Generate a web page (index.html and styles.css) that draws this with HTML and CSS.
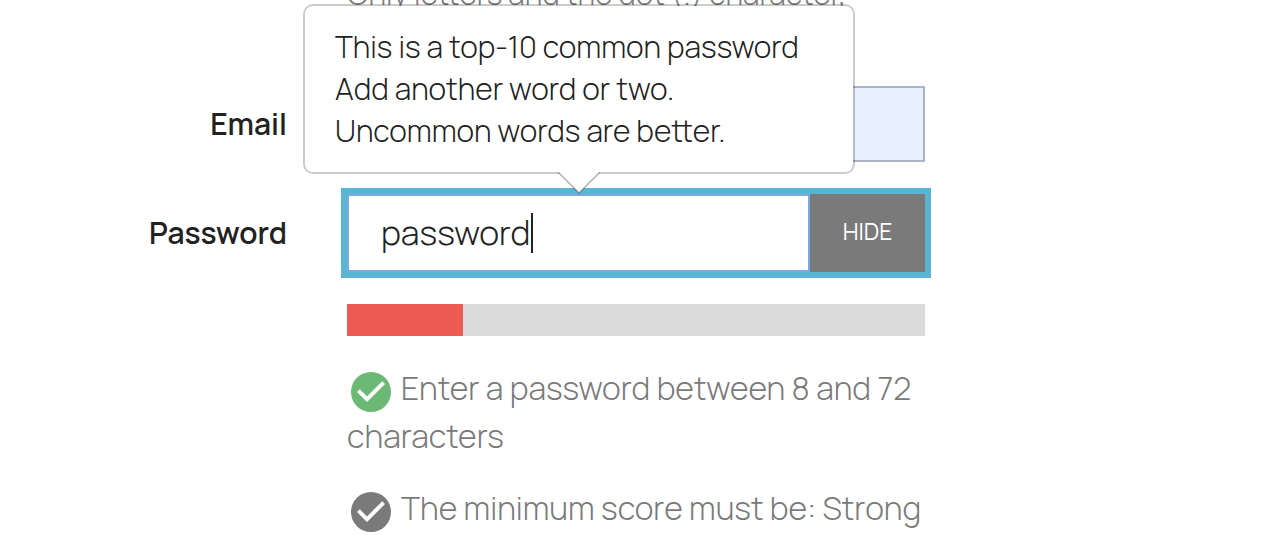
FILE: index.html
```html
<!DOCTYPE html>
<html lang="en">
<head>
<meta charset="utf-8">
<title>Account</title>
<link rel="stylesheet" href="styles.css">
</head>
<body>
<form class="form">
  <div class="row row-username">
    <p class="hint hint-small row-control">Only letters and the dot (.) character,</p>
  </div>
  <div class="row row-email">
    <label class="label" for="email">Email</label>
    <input class="field" id="email" type="email">
  </div>
  <div class="row row-password">
    <label class="label" for="password">Password</label>
    <div class="group">
      <input class="group-input" id="password" type="text" value="password" aria-describedby="feedback" autocomplete="off">
      <span class="caret"></span>
      <button class="toggle" type="button">HIDE</button>
      <div class="tooltip" id="feedback" role="tooltip">
        <div>This is a top-10 common password</div>
        <div>Add another word or two.</div>
        <div>Uncommon words are better.</div>
        <svg class="arrow" viewBox="0 0 44 22" aria-hidden="true"><path d="M1 0h42L22 21z" fill="#fff"/><path d="M1 0l21 21L43 0" fill="none" stroke="#000" stroke-opacity=".3" stroke-width="1.5"/></svg>
      </div>
    </div>
  </div>
  <div class="row row-strength">
    <div class="row-control">
      <div class="meter"><div class="meter-fill"></div></div>
      <p class="hint"><svg class="icon icon-ok" viewBox="0 0 24 24" aria-hidden="true"><path d="M12 2a10 10 0 1 0 0 20 10 10 0 0 0 0-20zm-2 15l-5-5 1.400-1.400L10 14.200l7.600-7.600L19 8z"/></svg>Enter a password between 8 and 72 characters</p>
      <p class="hint"><svg class="icon" viewBox="0 0 24 24" aria-hidden="true"><path d="M12 2a10 10 0 1 0 0 20 10 10 0 0 0 0-20zm-2 15l-5-5 1.400-1.400L10 14.200l7.600-7.600L19 8z"/></svg>The minimum score must be: Strong</p>
    </div>
  </div>
</form>
</body>
</html>
```
FILE: styles.css
```css
* {
  box-sizing: border-box;
}

body {
  margin: 0;
  background: #fff;
  color: #222;
  font-family: Manrope, Inter, "Liberation Sans", sans-serif;
  font-weight: 300;
  overflow: hidden;
}

.form {
  margin-top: -30px;
}

.row {
  display: grid;
  grid-template-columns: minmax(0, 287fr) minmax(0, 578fr) minmax(0, 281fr);
  column-gap: 60px;
  align-items: center;
}

.row-email {
  margin-top: 44px;
}

.row-password {
  margin-top: 32px;
}

.row-strength {
  margin-top: 32px;
}

.row-control {
  grid-column: 2;
}

.label {
  font-size: 30px;
  font-weight: 600;
  line-height: 42px;
  text-align: right;
}

.field {
  width: 100%;
  height: 76px;
  border: 2px solid #acb3c2;
  background: #e8effd;
}

.group {
  position: relative;
  display: flex;
  height: 78px;
  box-shadow: 0 0 0 6px #5ab5d2;
}

.group-input {
  flex: 1;
  min-width: 0;
  padding: 0 32px 2px;
  border: 2px solid #7aa9e6;
  outline: 0;
  background: #fff;
  color: #222;
  font: inherit;
  font-size: 34px;
}

.caret {
  position: absolute;
  left: 184px;
  top: 19px;
  width: 2px;
  height: 40px;
  background: #222;
}

.toggle {
  flex: 0 0 115px;
  padding: 0 0 4px;
  border: 0;
  background: #7a7a7a;
  color: #fff;
  font: inherit;
  font-size: 23px;
  font-weight: 400;
}

.tooltip {
  position: absolute;
  left: -44px;
  right: 70px;
  bottom: 98px;
  padding: 20px 30px;
  border: 2px solid rgba(0, 0, 0, 0.2);
  border-radius: 10px;
  background: #fff;
  background-clip: padding-box;
  font-size: 30px;
  line-height: 42px;
  white-space: nowrap;
}

.arrow {
  position: absolute;
  top: 100%;
  left: 50%;
  width: 44px;
  height: 22px;
  margin-left: -22px;
}

.meter {
  height: 32px;
  margin-bottom: 28px;
  background: #dbdbdb;
}

.meter-fill {
  width: 20%;
  height: 100%;
  background: #ec5b53;
}

.hint {
  margin: 0 0 24px;
  color: #7a7a7a;
  font-size: 32px;
  line-height: 48px;
}

.hint-small {
  font-size: 30px;
}

.icon {
  width: 48px;
  height: 48px;
  margin: -8px 6px -8px 0;
  vertical-align: -8px;
  fill: #7a7a7a;
}

.icon-ok {
  fill: #6cb976;
}
```
